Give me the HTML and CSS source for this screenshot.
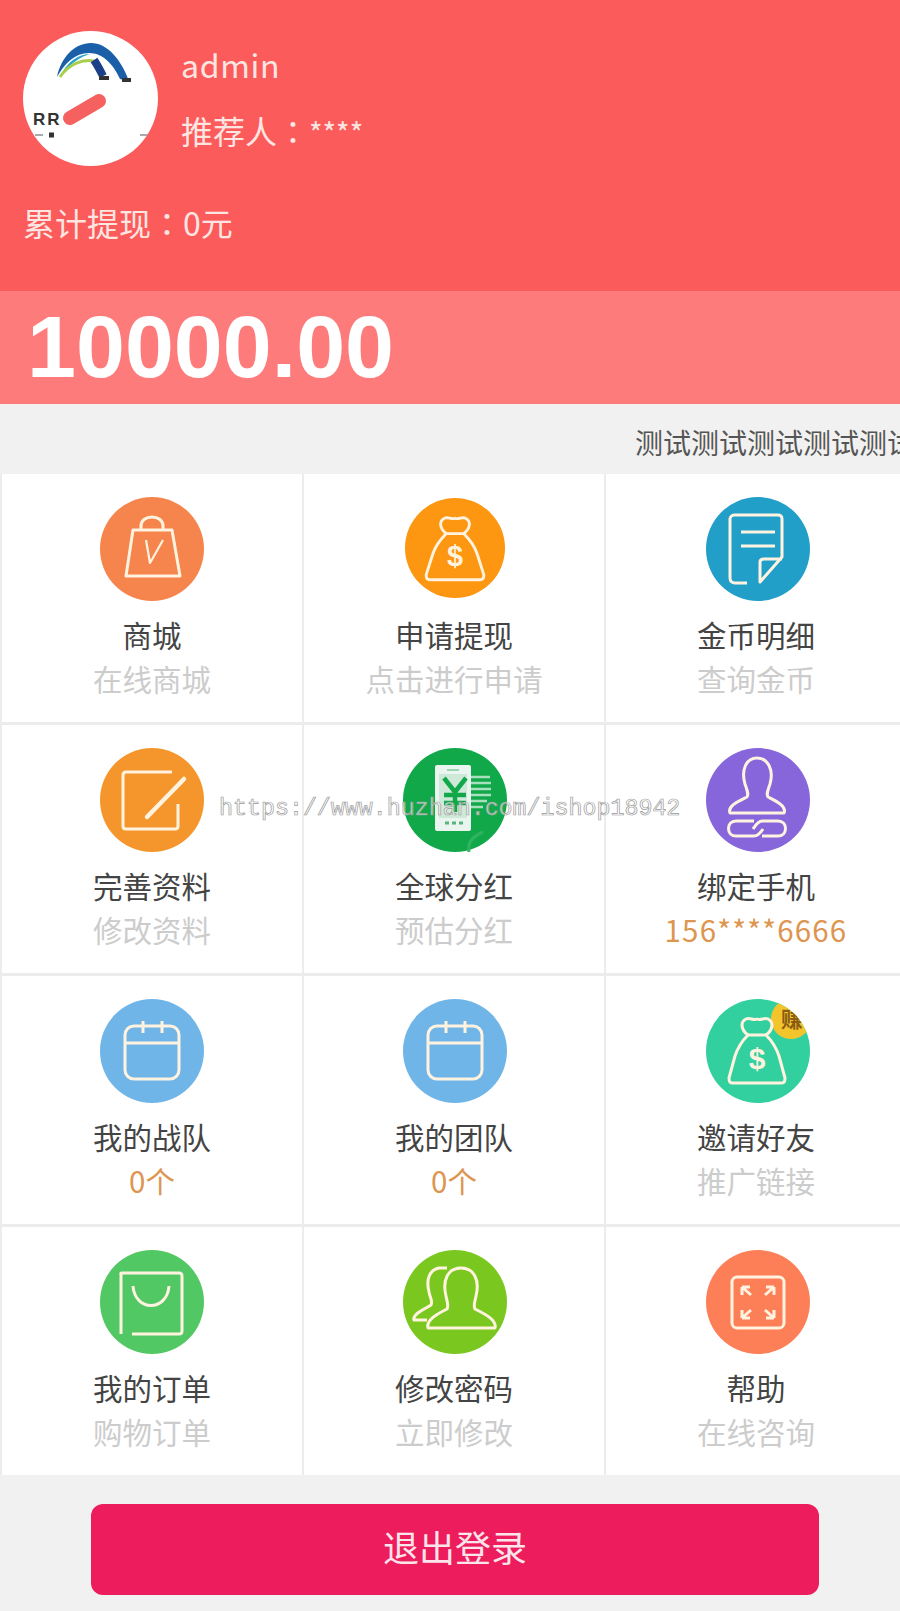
FILE: index.html
```html
<!DOCTYPE html>
<html lang="zh-CN">
<head>
    <meta charset="UTF-8">
    <meta name="viewport" content="width=device-width, initial-scale=1.0">
    <title>会员中心</title>
    <link rel="stylesheet" href="styles.css">
</head>
<body>
    <div class="page">
        <header class="top">
            <div class="user">
                <div class="avatar">
                    <svg viewBox="0 0 135 135" width="135" height="135">
                        <path d="M34 46C38 26 52 12 68 12C84 12 98 28 106 50L97 48C90 33 80 22 66 22C52 22 42 32 34 46Z" fill="#1a5fa8"/>
                        <path d="M37 46C44 30 56 23 68 23C62 24 50 29 37 46Z" fill="#2aa6c8"/>
                        <path d="M37 46C45 34 58 28 71 30" fill="none" stroke="#a9cf4a" stroke-width="3"/>
                        <path d="M71 29C75 35 77 39 80 45" fill="none" stroke="#1c3f8a" stroke-width="8"/>
                        <path d="M76 47H86M99 49H108" stroke="#333" stroke-width="4"/>
                        <path d="M47 87L76 70" fill="none" stroke="#f4615f" stroke-width="14" stroke-linecap="round"/>
                        <text x="10" y="94" class="logo-text">RR</text>
                        <path d="M12 104H20M117 104H125" stroke="#555" stroke-width="1"/>
                        <path d="M26 104H31" stroke="#333" stroke-width="5"/>
                    </svg>
                </div>
                <div class="user-info">
                    <div class="line name">admin</div>
                    <div class="line">推荐人<span class="colon" lang="zh-TW">：</span><span class="stars">****</span></div>
                </div>
            </div>
            <div class="total">累计提现<span class="colon" lang="zh-TW">：</span>0元</div>
        </header>

        <div class="balance">10000.00</div>

        <div class="notice">测试测试测试测试测试测试</div>

        <div class="grid">
            <a class="cell">
                <svg class="icon" viewBox="0 0 104 104">
                    <circle cx="52" cy="52" r="52" fill="#f5854c"/>
                    <g class="ln thick">
                        <path d="M41 33V29C41 17 63 17 63 29V33"/>
                        <path d="M33 33H72L80 79H26Z"/>
                        <path d="M46 43L50 66L63 43" stroke-width="2.2"/>
                    </g>
                </svg>
                <div class="title">商城</div>
                <div class="sub">在线商城</div>
            </a>
            <a class="cell">
                <svg class="icon small" viewBox="0 0 104 104">
                    <circle cx="52" cy="52" r="52" fill="#fd9611"/>
                    <g class="ln thick">
                        <path d="M43 37C36 32 35 24 41 21C45 19 48 23 52 21C56 23 59 19 63 21C69 24 68 32 61 37"/>
                        <path d="M43 37H61C66 42 72 49 75 58L82 80C82 84 80 85 78 85H26C24 85 22 84 22 80L29 58C32 49 38 42 43 37Z"/>
                    </g>
                    <text x="52" y="71" class="dollar">$</text>
                </svg>
                <div class="title">申请提现</div>
                <div class="sub">点击进行申请</div>
            </a>
            <a class="cell">
                <svg class="icon" viewBox="0 0 104 104">
                    <circle cx="52" cy="52" r="52" fill="#229fc8"/>
                    <g class="ln thick">
                        <path d="M41 86H29C26 86 24 84 24 81V22C24 20 26 18 28 18H72C75 18 76 20 76 22V60L54 85V65C54 63 56 62 58 62H76"/>
                        <path d="M35 35H69M35 49H69"/>
                    </g>
                </svg>
                <div class="title">金币明细</div>
                <div class="sub">查询金币</div>
            </a>

            <a class="cell">
                <svg class="icon" viewBox="0 0 104 104">
                    <circle cx="52" cy="52" r="52" fill="#f5962d"/>
                    <g class="ln thick">
                        <path d="M72 24H26C24 24 23 25 23 27V78C23 80 24 81 26 81H75C77 81 78 80 78 78V56"/>
                        <path d="M47 69L84 31" stroke-width="4.5" stroke-linecap="round"/>
                    </g>
                </svg>
                <div class="title">完善资料</div>
                <div class="sub">修改资料</div>
            </a>
            <a class="cell">
                <svg class="icon" viewBox="0 0 104 104">
                    <circle cx="52" cy="52" r="52" fill="#11a84a"/>
                    <path d="M66 104C64 94 70 88 80 84" fill="none" stroke="#2fb35f" stroke-width="3"/>
                    <rect x="32" y="17" width="36" height="66" rx="2" fill="#e9f5ee"/>
                    <path d="M44 22H56" stroke="#7fc89b" stroke-width="1.5"/>
                    <rect x="36" y="26" width="28" height="44" fill="#cfe9d9"/>
                    <path d="M41 30L52 44L63 30M52 44V64M41 47H63M41 55H63" fill="none" stroke="#11a84a" stroke-width="4.5"/>
                    <path d="M68 29H87M68 35H88M68 41H88M68 47H88M68 53H84M68 59H80" stroke="#a8e0bd" stroke-width="2.5"/>
                    <path d="M42 75H46M49 75H53M56 75H60" stroke="#5ab47f" stroke-width="3"/>
                </svg>
                <div class="title">全球分红</div>
                <div class="sub">预估分红</div>
            </a>
            <a class="cell">
                <svg class="icon" viewBox="0 0 104 104">
                    <circle cx="52" cy="52" r="52" fill="#8766dc"/>
                    <g class="ln thick">
                        <path d="M24 65H78C81 58 70 53 62 49C60 46 62 42 64 36C68 22 62 10 51 10C40 10 35 22 39 36C41 42 43 46 41 49C33 53 21 58 24 65Z"/>
                        <path d="M48 73H30C20 73 20 88 30 88H48C52 88 55 84 57 81"/>
                        <path d="M56 88H72C82 88 82 73 72 73H56C52 73 49 78 47 81"/>
                    </g>
                </svg>
                <div class="title">绑定手机</div>
                <div class="sub orange phone">156****6666</div>
            </a>

            <a class="cell">
                <svg class="icon" viewBox="0 0 104 104">
                    <circle cx="52" cy="52" r="52" fill="#70b5e8"/>
                    <g class="ln thick">
                        <rect x="25" y="27" width="54" height="53" rx="9"/>
                        <path d="M25 44H79M43 22V34M62 22V34"/>
                    </g>
                </svg>
                <div class="title">我的战队</div>
                <div class="sub orange">0个</div>
            </a>
            <a class="cell">
                <svg class="icon" viewBox="0 0 104 104">
                    <circle cx="52" cy="52" r="52" fill="#70b5e8"/>
                    <g class="ln thick">
                        <rect x="25" y="27" width="54" height="53" rx="9"/>
                        <path d="M25 44H79M43 22V34M62 22V34"/>
                    </g>
                </svg>
                <div class="title">我的团队</div>
                <div class="sub orange">0个</div>
            </a>
            <a class="cell">
                <svg class="icon" viewBox="0 0 104 104">
                    <defs>
                        <clipPath id="round"><circle cx="52" cy="52" r="52"/></clipPath>
                    </defs>
                    <circle cx="52" cy="52" r="52" fill="#33d09f"/>
                    <g clip-path="url(#round)">
                        <circle cx="85" cy="20" r="20" fill="#f3c52c"/>
                        <text x="86" y="28" class="earn">赚</text>
                    </g>
                    <g class="ln thick">
                        <path d="M42 36C35 31 34 23 40 20C44 18 47 22 51 20C55 22 58 18 62 20C68 23 67 31 60 36"/>
                        <path d="M42 36H60C65 41 70 48 73 57L79 79C79 82 78 84 76 84H26C24 84 23 82 23 79L29 57C32 48 37 41 42 36Z"/>
                    </g>
                    <text x="51" y="70" class="dollar">$</text>
                </svg>
                <div class="title">邀请好友</div>
                <div class="sub">推广链接</div>
            </a>

            <a class="cell">
                <svg class="icon" viewBox="0 0 104 104">
                    <circle cx="52" cy="52" r="52" fill="#52c865"/>
                    <g class="ln thick">
                        <path d="M21 84V25C21 24 20 23 22 23H79C81 23 82 24 82 26V81C82 83 81 84 79 84H32"/>
                        <path d="M33 36C35 62 67 62 69 36"/>
                    </g>
                </svg>
                <div class="title">我的订单</div>
                <div class="sub">购物订单</div>
            </a>
            <a class="cell">
                <svg class="icon" viewBox="0 0 104 104">
                    <circle cx="52" cy="52" r="52" fill="#7ac81f"/>
                    <g class="ln thick">
                        <path d="M25 78H92C94 70 82 64 72 59C70 55 72 52 73 46C77 30 71 18 58 18C45 18 39 30 43 46C44 52 46 55 44 59C34 64 23 70 25 78Z"/>
                        <path d="M44 18H36C26 20 23 30 26 42C27 48 30 51 28 55C22 59 9 64 11 70H24"/>
                    </g>
                </svg>
                <div class="title">修改密码</div>
                <div class="sub">立即修改</div>
            </a>
            <a class="cell">
                <svg class="icon" viewBox="0 0 104 104">
                    <circle cx="52" cy="52" r="52" fill="#fd7f58"/>
                    <g class="ln thick">
                        <rect x="26" y="27" width="52" height="51" rx="5"/>
                        <path d="M36 37L45 45M36 37H44M36 37V45M68 37L59 45M68 37H60M68 37V45M36 68L45 60M36 68H44M36 68V60M68 68L59 60M68 68H60M68 68V60"/>
                    </g>
                </svg>
                <div class="title">帮助</div>
                <div class="sub">在线咨询</div>
            </a>
        </div>

        <div class="actions">
            <button type="button" class="logout">退出登录</button>
        </div>

        <div class="watermark">https://www.huzhan.com/ishop18942</div>
    </div>
</body>
</html>
```

FILE: styles.css
```css
* {
    box-sizing: border-box;
}

body {
    margin: 0;
    padding: 0;
    background-color: #f1f1f1;
    font-family: "Noto Sans CJK SC", "Noto Sans", sans-serif;
}

.page {
    position: relative;
    width: 900px;
    height: 1611px;
    overflow: hidden;
}

/* header */
.top {
    height: 291px;
    padding: 31px 0 0 23px;
    background-color: #fb5b5b;
    color: #fde6e2;
}

.user {
    display: flex;
}

.avatar {
    width: 135px;
    height: 135px;
    margin-right: 23px;
    border-radius: 50%;
    background-color: #fff;
    overflow: hidden;
}

.avatar svg {
    display: block;
}

.logo-text {
    font-family: "Liberation Sans", sans-serif;
    font-size: 17px;
    font-weight: bold;
    letter-spacing: 2px;
    fill: #333;
}

.line {
    height: 66px;
    font-size: 32px;
    line-height: 66px;
}

.name {
    letter-spacing: 0.7px;
}

.colon {
    font-family: "Noto Sans CJK TC", sans-serif;
}

.stars {
    font-size: 29px;
}

.total {
    margin-top: 31px;
    font-size: 32px;
    line-height: 50px;
}

/* balance */
.balance {
    height: 113px;
    padding-left: 27px;
    background-color: #fd7b7b;
    color: #fff;
    font-family: "Liberation Sans", Arial, sans-serif;
    font-size: 88px;
    font-weight: bold;
    line-height: 112px;
}

/* scrolling notice */
.notice {
    height: 70px;
    padding: 18px 0 0 635px;
    color: #555;
    font-size: 28px;
    line-height: 40px;
    white-space: nowrap;
    overflow: hidden;
}

/* menu */
.grid {
    display: grid;
    grid-template-columns: repeat(3, 300px);
    grid-auto-rows: 248px;
    gap: 3px 2px;
    padding-left: 2px;
    background-color: #ececec;
    width: 906px;
}

.cell {
    display: block;
    padding-top: 23px;
    background-color: #fff;
    text-align: center;
}

.icon {
    display: block;
    width: 104px;
    height: 104px;
    margin: 0 auto 11px;
}

.cell:nth-child(3n+2) .icon {
    margin-left: 99px;
}

.cell:nth-child(3n) .icon {
    margin-left: 100px;
}

.cell .icon.small {
    width: 100px;
    height: 100px;
    margin: 1px 0 14px 101px;
}

.ln {
    fill: none;
    stroke: #fff3df;
    stroke-width: 2.2;
    stroke-linejoin: round;
}

.ln.thick {
    stroke-width: 3;
}

.dollar {
    fill: #fff3df;
    font-family: "Liberation Sans", sans-serif;
    font-size: 30px;
    font-weight: bold;
    text-anchor: middle;
}

.earn {
    fill: #8a5c14;
    font-size: 22px;
    font-weight: bold;
    text-anchor: middle;
}

.title {
    color: #444;
    font-size: 29.5px;
    line-height: 44px;
}

.sub {
    color: #ccc;
    font-size: 29.5px;
    line-height: 44px;
}

.sub.orange {
    color: #dd9550;
}

.phone {
    letter-spacing: 1.2px;
}

/* logout */
.actions {
    padding: 29px 0 0 91px;
}

.logout {
    display: block;
    width: 728px;
    height: 91px;
    padding: 0 0 8px;
    border: none;
    border-radius: 12px;
    background-color: #ed1c5c;
    color: #fbe4ea;
    font-family: inherit;
    font-size: 36px;
}

/* site stamp over the page */
.watermark {
    position: absolute;
    top: 794px;
    left: 219px;
    color: rgba(255, 255, 255, 0.6);
    -webkit-text-stroke: 0.7px #999;
    font-family: "Liberation Mono", monospace;
    font-size: 23.3px;
    line-height: 30px;
    white-space: nowrap;
}
```
